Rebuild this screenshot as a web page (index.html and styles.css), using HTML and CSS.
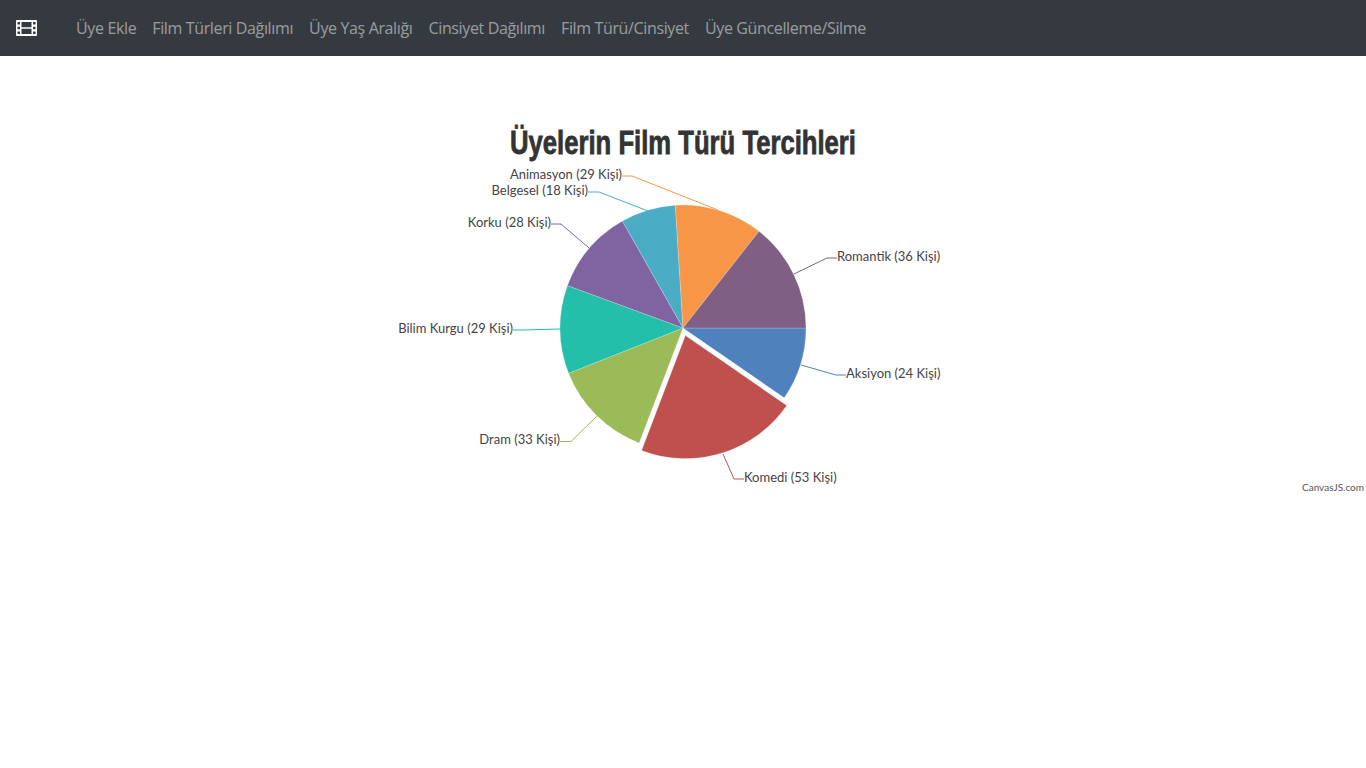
FILE: index.html
```html
<!DOCTYPE html>
<html lang="tr">
<head>
  <meta charset="UTF-8">
  <title>Üyelerin Film Türü Tercihleri</title>
  <link rel="stylesheet" href="styles.css">
</head>
<body>
  <nav class="navbar">
    <a class="brand" href="#">
      <svg class="brand-icon" viewBox="0 0 21 16" width="21" height="16">
        <path fill-rule="evenodd" d="M1 0H20a1 1 0 0 1 1 1V15a1 1 0 0 1-1 1H1a1 1 0 0 1-1-1V1a1 1 0 0 1 1-1ZM1.5 2V4.5H4V2ZM1.5 6.7V9.3H4V6.7ZM1.5 11.5V14H4V11.5ZM17 2V4.5H19.500V2ZM17 6.700V9.300H19.500V6.700ZM17 11.500V14H19.500V11.500ZM5.500 2V7.200H15.500V2ZM5.500 8.800V14H15.500V8.800Z"/>
      </svg>
    </a>
    <ul class="nav-links">
      <li><a href="#">Üye Ekle</a></li>
      <li><a href="#">Film Türleri Dağılımı</a></li>
      <li><a href="#">Üye Yaş Aralığı</a></li>
      <li><a href="#">Cinsiyet Dağılımı</a></li>
      <li><a href="#">Film Türü/Cinsiyet</a></li>
      <li><a href="#">Üye Güncelleme/Silme</a></li>
    </ul>
  </nav>

  <div class="chart-container">
    <svg class="chart" viewBox="0 56 1366 444" width="1366" height="444">
      <text class="chart-title" x="683" y="154" text-anchor="middle" textLength="346" lengthAdjust="spacingAndGlyphs">Üyelerin Film Türü Tercihleri</text>

      <g class="leaders">
        <polyline stroke="#7f6084" points="794,274 827,258 837,258"/>
        <polyline stroke="#4f81bc" points="801,365 836,375 846,375"/>
        <polyline stroke="#c0504e" points="723,454 734,479 744,479"/>
        <polyline stroke="#9bbb58" points="597,416 571,441.500 560,441.500"/>
        <polyline stroke="#23bfaa" points="560,329 523,330 513,330"/>
        <polyline stroke="#8064a1" points="589,248 561,224 551,224"/>
        <polyline stroke="#4aacc5" points="648,211 599,192 588,192"/>
        <polyline stroke="#f79647" points="718,210 632,176 622,176"/>
      </g>

      <g class="slices">
        <path fill="#4f81bc" d="M683 328L806 328A123 123 0 0 1 784.300 397.800Z"/>
        <path fill="#c0504e" d="M685.400 335.600L786.700 405.400A123 123 0 0 1 641.600 450.500Z"/>
        <path fill="#9bbb58" d="M683 328L639.200 442.900A123 123 0 0 1 568.600 373.300Z"/>
        <path fill="#23bfaa" d="M683 328L568.600 373.300A123 123 0 0 1 567.500 285.600Z"/>
        <path fill="#8064a1" d="M683 328L567.500 285.600A123 123 0 0 1 622.400 221Z"/>
        <path fill="#4aacc5" d="M683 328L622.400 221A123 123 0 0 1 675.300 205.200Z"/>
        <path fill="#f79647" d="M683 328L675.300 205.200A123 123 0 0 1 759 231.300Z"/>
        <path fill="#7f6084" d="M683 328L759 231.300A123 123 0 0 1 806 328Z"/>
      </g>

      <g class="labels">
        <text x="837" y="261">Romantik (36 Kişi)</text>
        <text x="846" y="378">Aksiyon (24 Kişi)</text>
        <text x="744" y="482">Komedi (53 Kişi)</text>
        <text x="560" y="444" text-anchor="end">Dram (33 Kişi)</text>
        <text x="513" y="333" text-anchor="end">Bilim Kurgu (29 Kişi)</text>
        <text x="551" y="227" text-anchor="end">Korku (28 Kişi)</text>
        <text x="588" y="195" text-anchor="end">Belgesel (18 Kişi)</text>
        <text x="622" y="179" text-anchor="end">Animasyon (29 Kişi)</text>
      </g>

      <text class="credit" x="1364" y="491" text-anchor="end">CanvasJS.com</text>
    </svg>
  </div>
</body>
</html>
```

FILE: styles.css
```css
body {
  background-color: #fff;
  font-family: "Open Sans", "Noto Sans", sans-serif;
  margin: 0;
}

.navbar {
  background-color: #343a40;
  display: flex;
  align-items: center;
  height: 56px;
  padding: 0 16px;
}

.brand {
  display: flex;
  margin-right: 31px;
}

.brand-icon {
  fill: #fff;
}

.nav-links {
  display: flex;
  list-style: none;
  margin: 0;
  padding: 0;
}

.nav-links a {
  color: rgba(255, 255, 255, 0.5);
  display: block;
  font-size: 16px;
  letter-spacing: -0.36px;
  padding: 8px;
  text-decoration: none;
  white-space: nowrap;
}

.chart {
  display: block;
}

.chart-title {
  fill: #333;
  font-family: "Liberation Sans", sans-serif;
  font-size: 33px;
  font-weight: bold;
  stroke: #333;
  stroke-width: 0.8px;
}

.leaders polyline {
  fill: none;
  stroke-width: 1;
}

.slices path {
  stroke: #fff;
  stroke-width: 0.2;
}

.labels text {
  fill: #444;
  font-family: "Lato", sans-serif;
  font-size: 13px;
}

.credit {
  fill: #555;
  font-family: "Lato", sans-serif;
  font-size: 10px;
}
```
